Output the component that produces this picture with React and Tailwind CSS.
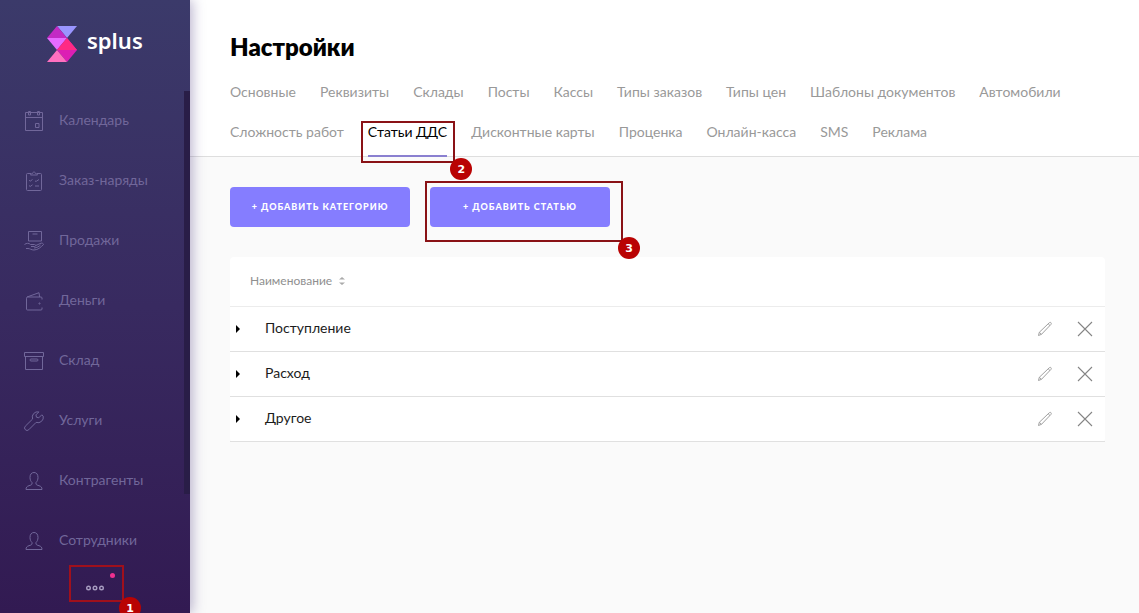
const NAV = [
  { label: 'Календарь', icon: 'calendar' },
  { label: 'Заказ-наряды', icon: 'orders' },
  { label: 'Продажи', icon: 'sales' },
  { label: 'Деньги', icon: 'wallet' },
  { label: 'Склад', icon: 'box' },
  { label: 'Услуги', icon: 'wrench' },
  { label: 'Контрагенты', icon: 'person' },
  { label: 'Сотрудники', icon: 'person' },
];

const TABS = [
  'Основные', 'Реквизиты', 'Склады', 'Посты', 'Кассы', 'Типы заказов', 'Типы цен',
  'Шаблоны документов', 'Автомобили', 'Сложность работ', 'Статьи ДДС',
  'Дисконтные карты', 'Проценка', 'Онлайн-касса', 'SMS', 'Реклама',
];

const ROWS = ['Поступление', 'Расход', 'Другое'];

const ICONS = {
  calendar: (
    <>
      <path d="M1.5 1.5h17v18h-17zM1.5 6.5h17" />
      <path d="M4.5.5h2v3.5h-2zM13.5.5h2v3.5h-2z" />
      <path d="M11.5 12.5h3.500v4h-3.500z" />
    </>
  ),
  orders: (
    <>
      <path d="M7 2.5H3.5a1 1 0 0 0-1 1v15a1 1 0 0 0 1 1h13a1 1 0 0 0 1-1v-15a1 1 0 0 0-1-1H13" />
      <path d="M6.5 4c.3-1.4 1.3-1.2 2-1.5.3-2 2.7-2 3 0 .7.3 1.7.1 2 1.5z" />
      <path d="M5 9.2l1.2 1L8.5 8.5M5 14.5l1.2 1 2.3-1.7M11 10.2h1.5L15 8.5M11 15h4" />
    </>
  ),
  sales: (
    <>
      <path d="M4.5.5h13v9.5h-13zM8.5 3h5" />
      <path d="M.5 13.5c2-1.6 4.5-1.6 6 0h4c1.5 0 1.5 2 0 2H7M11.8 14.5l5.2-2.3c1-.4 2.4.3 2.5 1.3-2.5 2.5-5.5 5.5-9.5 5.500-2.8 0-4-1.5-6-1.5H2" />
      <path d="M10 17c3-.3 5-1.5 6.5-3" />
    </>
  ),
  wallet: (
    <>
      <path d="M18 8.5V7a1 1 0 0 0-1-1H3.5a1.2 1.2 0 0 0-1 1.2V18a1 1 0 0 0 1 1H17a1 1 0 0 0 1-1v-1.5" />
      <path d="M3 6l12-4.3.6 4.3" />
      <circle cx="15.5" cy="12.5" r=".6" />
    </>
  ),
  box: (
    <>
      <path d="M.5 1.5h19v4h-19zM1.5 5.5v13h17v-13" />
      <rect x="6" y="8" width="8" height="2" rx="1" />
    </>
  ),
  wrench: (
    <path d="M17.8 3.8l-3 3-2.3-.6-.6-2.3 3-3A5.4 5.4 0 0 0 8.6 8L1.3 15.2a2.4 2.4 0 0 0 3.5 3.5l7.3-7.3a5.4 5.4 0 0 0 7.1-6.3z" />
  ),
  person: (
    <path d="M8 13v-1.5C6.8 10.3 6 8.8 6 6.5 6 3.3 7.5 1.5 10 1.5s4 1.8 4 5c0 2.3-.8 3.8-2 5V13c.3.8 1.2 1.2 3 1.7 2.2.7 3 1.6 3 3.8H2c0-2.200.8-3.100 3-3.800 1.800-.5 2.700-.9 3-1.700z" />
  ),
};

function NavIcon({ name }) {
  return (
    <svg viewBox="0 0 20 20" className="mt-0.5 size-5 shrink-0" fill="none" stroke="currentColor" strokeWidth="1" aria-hidden="true">
      {ICONS[name]}
    </svg>
  );
}

function Logo() {
  return (
    <svg viewBox="0 0 30 36" className="h-9 w-[30px]" aria-hidden="true">
      <path d="M10 0H30L20 12z" fill="#9a95ff" />
      <path d="M10 0L20 12H0z" fill="#c22bc4" />
      <path d="M0 12H20L10 24z" fill="#e66bff" />
      <path d="M20 12L30 24L20 36L10 24z" fill="#dc1fb4" />
      <path d="M20 12L30 24L10 24z" fill="#ff2a84" />
      <path d="M10 24L20 36H0z" fill="#ff70c0" />
    </svg>
  );
}

function Callout({ number, frame }) {
  return (
    <span className={`pointer-events-none absolute z-10 border-2 ${frame}`}>
      <span className="absolute -right-[19px] -bottom-[19px] flex size-[22px] items-center justify-center rounded-full bg-[#b90303] font-['DejaVu_Sans',sans-serif] text-[11px] leading-none font-bold text-white">
        {number}
      </span>
    </span>
  );
}

function Sidebar() {
  return (
    <aside className="relative z-20 h-screen w-[190px] shrink-0 overflow-hidden bg-linear-to-b from-[#3b3a6a] via-[#382a60] to-[#321a52] shadow-[2px_0_12px_rgba(50,30,110,0.35)]">
      <a href="#home" className="flex h-[90px] items-center gap-2.5 pb-0.5 pl-[47px]">
        <Logo />
        <span className="pb-2 font-['Noto_Sans',sans-serif] text-[22px] leading-7 font-semibold text-white">splus</span>
      </a>
      <nav className="flex flex-col">
        {NAV.map((item) => (
          <a key={item.label} href="#nav" className="flex h-15 items-center gap-[15px] pl-6 text-sm text-[#71679a]">
            <NavIcon name={item.icon} />
            {item.label}
          </a>
        ))}
      </nav>
      <div className="flex justify-center">
        <button type="button" aria-label="Ещё" className="relative flex h-9 w-14 items-center justify-center">
          <svg viewBox="0 0 20 6" className="h-1.5 w-5" fill="none" stroke="#a79cc0" strokeWidth="1.4" aria-hidden="true">
            <circle cx="3.5" cy="3" r="1.8" />
            <circle cx="10" cy="3" r="1.8" />
            <circle cx="16.5" cy="3" r="1.8" />
          </svg>
          <span className="absolute top-[3px] right-2 size-[5px] rounded-full bg-[#f0308f]" />
          <Callout number={1} frame="-top-[5px] left-0.5 h-[37px] w-[55px] border-[#a0101c]" />
        </button>
      </div>
      <div className="absolute top-[91px] right-0 h-[403px] w-1.5 bg-[#291d47]" />
    </aside>
  );
}

function Tabs() {
  return (
    <nav className="flex flex-wrap gap-x-6">
      {TABS.map((tab) =>
        tab === 'Статьи ДДС' ? (
          <a key={tab} href="#tab" aria-current="page" className="relative flex h-10 items-center text-black">
            {tab}
            <span className="absolute inset-x-0 -bottom-[5px] h-0.5 bg-[#8a80d0]" />
            <Callout number={2} frame="-left-[7px] -right-2 top-[9px] -bottom-[11px] border-[#8a1216]" />
          </a>
        ) : (
          <a key={tab} href="#tab" className="flex h-10 items-center text-[#999]">{tab}</a>
        )
      )}
    </nav>
  );
}

function AddButton({ children }) {
  return (
    <button type="button" className="h-10 w-[180px] rounded bg-[#857dff] text-[9px] font-black tracking-[1px] text-white uppercase">
      {children}
    </button>
  );
}

function CategoryTable() {
  return (
    <table className="w-full border-collapse rounded bg-white text-left">
      <thead>
        <tr className="h-[49px] border-b border-[#ececec]">
          <th colSpan={2} className="pl-5 text-xs font-normal text-[#8f8f8f]">
            <button type="button" className="flex items-center gap-1.5">
              Наименование
              <svg viewBox="0 0 8 10" className="h-2.5 w-2" fill="#aaa" aria-hidden="true">
                <path d="M4 1L7 3.5H1zM4 9L1 6.5h6z" />
              </svg>
            </button>
          </th>
        </tr>
      </thead>
      <tbody>
        {ROWS.map((row) => (
          <tr key={row} className="h-[45px] border-b border-[#e0e0e0]">
            <td className="pb-0.5 text-sm text-[#1c1c1c]">
              <button type="button" className="flex items-center gap-[25px] pl-[5px]">
                <svg viewBox="0 0 5 8" className="mt-0.5 h-2 w-[5px]" fill="#000" aria-hidden="true">
                  <path d="M1 0L5 4L1 8z" />
                </svg>
                {row}
              </button>
            </td>
            <td className="pr-3">
              <div className="flex items-center justify-end gap-6">
                <button type="button" aria-label="Изменить">
                  <svg viewBox="0 0 16 16" className="size-4" fill="none" stroke="#a0a0a0" strokeWidth="1" aria-hidden="true">
                    <path d="M1.5 14.5l.8-3.2L12 2c.7-.7 1.5-.8 2-.3s.4 1.3-.3 2L4.5 13.3zM2.3 11.3l2.2 2M11.2 2.8l1.8 1.8" />
                  </svg>
                </button>
                <button type="button" aria-label="Удалить">
                  <svg viewBox="0 0 16 16" className="size-4" fill="none" stroke="#858585" strokeWidth="1.1" aria-hidden="true">
                    <path d="M1 1l14 14M15 1L1 15" />
                  </svg>
                </button>
              </div>
            </td>
          </tr>
        ))}
      </tbody>
    </table>
  );
}

export default function App() {
  return (
    <div className="flex h-screen bg-[#fafafa] font-['Lato',sans-serif] text-sm">
      <Sidebar />
      <main className="min-w-0 flex-1">
        <header className="border-b border-[#dedede] bg-white px-10 pt-[31px] pb-1">
          <h1 className="pb-[9px] text-2xl font-extrabold text-black">Настройки</h1>
          <Tabs />
        </header>
        <div className="pt-[30px] pr-[34px] pl-10">
          <div className="flex gap-5 pb-[30px]">
            <AddButton>+ Добавить категорию</AddButton>
            <div className="relative">
              <AddButton>+ Добавить статью</AddButton>
              <Callout number={3} frame="-top-1.5 -right-[13px] -bottom-[15px] -left-[5px] border-[#8a1216]" />
            </div>
          </div>
          <CategoryTable />
        </div>
      </main>
    </div>
  );
}
